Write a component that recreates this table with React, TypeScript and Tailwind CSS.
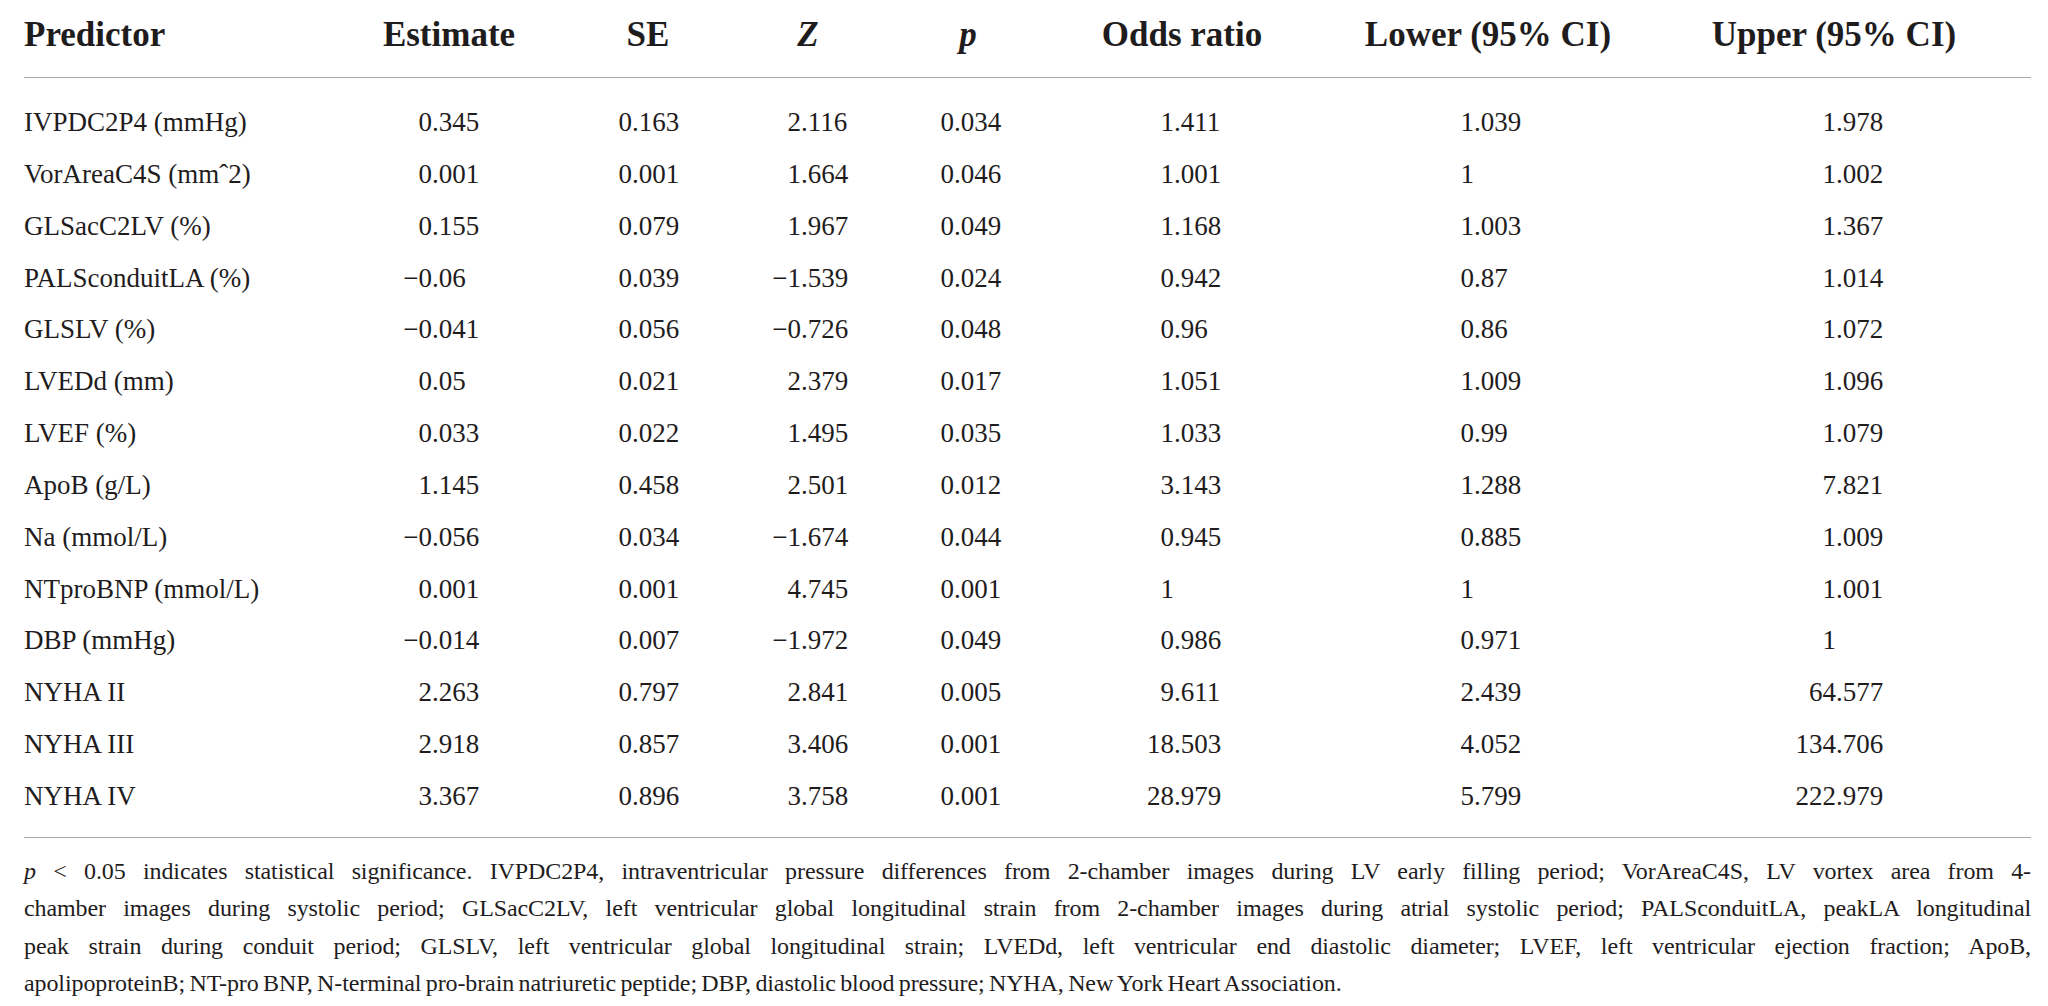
import React from 'react';

const cols = 'grid grid-cols-[325px_200px_198px_122px_198px_230px_382px_310px]';

// width of the integer part in each numeric column, so the decimal points line up
const intWidths = ['w-[83px]', 'w-[83px]', 'w-[54px]', 'w-[85px]', 'w-[107px]', 'w-[177px]', 'w-[157px]'];

const rows: [string, string[]][] = [
  ['IVPDC2P4 (mmHg)', ['0.345', '0.163', '2.116', '0.034', '1.411', '1.039', '1.978']],
  ['VorAreaC4S (mmˆ2)', ['0.001', '0.001', '1.664', '0.046', '1.001', '1', '1.002']],
  ['GLSacC2LV (%)', ['0.155', '0.079', '1.967', '0.049', '1.168', '1.003', '1.367']],
  ['PALSconduitLA (%)', ['−0.06', '0.039', '−1.539', '0.024', '0.942', '0.87', '1.014']],
  ['GLSLV (%)', ['−0.041', '0.056', '−0.726', '0.048', '0.96', '0.86', '1.072']],
  ['LVEDd (mm)', ['0.05', '0.021', '2.379', '0.017', '1.051', '1.009', '1.096']],
  ['LVEF (%)', ['0.033', '0.022', '1.495', '0.035', '1.033', '0.99', '1.079']],
  ['ApoB (g/L)', ['1.145', '0.458', '2.501', '0.012', '3.143', '1.288', '7.821']],
  ['Na (mmol/L)', ['−0.056', '0.034', '−1.674', '0.044', '0.945', '0.885', '1.009']],
  ['NTproBNP (mmol/L)', ['0.001', '0.001', '4.745', '0.001', '1', '1', '1.001']],
  ['DBP (mmHg)', ['−0.014', '0.007', '−1.972', '0.049', '0.986', '0.971', '1']],
  ['NYHA II', ['2.263', '0.797', '2.841', '0.005', '9.611', '2.439', '64.577']],
  ['NYHA III', ['2.918', '0.857', '3.406', '0.001', '18.503', '4.052', '134.706']],
  ['NYHA IV', ['3.367', '0.896', '3.758', '0.001', '28.979', '5.799', '222.979']],
];

const Num = ({ value, w }: { value: string; w: string }) => {
  const dot = value.indexOf('.');
  const int = dot === -1 ? value : value.slice(0, dot);
  const frac = dot === -1 ? '' : value.slice(dot);
  return (
    <div className="flex">
      <span className={`${w} text-right shrink-0`}>{int}</span>
      <span>{frac}</span>
    </div>
  );
};

const App = () => {
  return (
    <div className="w-[2048px] h-[1006px] bg-white text-[#1f1c1d] font-['Liberation_Serif',serif] overflow-hidden">
      <div className="ml-[24px] w-[2007px]">
        <div className={`${cols} h-[78px] pt-[15px] text-[35px] leading-[40px] font-bold border-b border-[#a9a9a9]`}>
          <div>Predictor</div>
          <div className="text-center">Estimate</div>
          <div className="text-center">SE</div>
          <div className="text-center italic">Z</div>
          <div className="text-center italic">p</div>
          <div className="text-center">Odds ratio</div>
          <div className="text-center">Lower (95% CI)</div>
          <div className="text-center">Upper (95% CI)</div>
        </div>
        <div className="pt-[19px] pb-[14px] text-[27px] leading-[51.85px] border-b border-[#a9a9a9]">
          {rows.map(([name, vals]) => (
            <div key={name} className={cols}>
              <div>{name}</div>
              {vals.map((v, i) => (
                <Num key={i} value={v} w={intWidths[i]} />
              ))}
            </div>
          ))}
        </div>
        <div className="mt-[15px] text-[24px] leading-[37.5px] tracking-[-0.1px] [word-spacing:-1.5px]">
          <div className="text-justify [text-align-last:justify] whitespace-nowrap">
            <span className="italic">p</span> &lt; 0.05 indicates statistical significance. IVPDC2P4, intraventricular pressure differences from 2-chamber images during LV early filling period; VorAreaC4S, LV vortex area from 4-
          </div>
          <div className="text-justify [text-align-last:justify] whitespace-nowrap">
            chamber images during systolic period; GLSacC2LV, left ventricular global longitudinal strain from 2-chamber images during atrial systolic period; PALSconduitLA, peakLA longitudinal
          </div>
          <div className="text-justify [text-align-last:justify] whitespace-nowrap">
            peak strain during conduit period; GLSLV, left ventricular global longitudinal strain; LVEDd, left ventricular end diastolic diameter; LVEF, left ventricular ejection fraction; ApoB,
          </div>
          <div className="whitespace-nowrap">
            apolipoproteinB; NT-pro BNP, N-terminal pro-brain natriuretic peptide; DBP, diastolic blood pressure; NYHA, New York Heart Association.
          </div>
        </div>
      </div>
    </div>
  );
};

export default App;
